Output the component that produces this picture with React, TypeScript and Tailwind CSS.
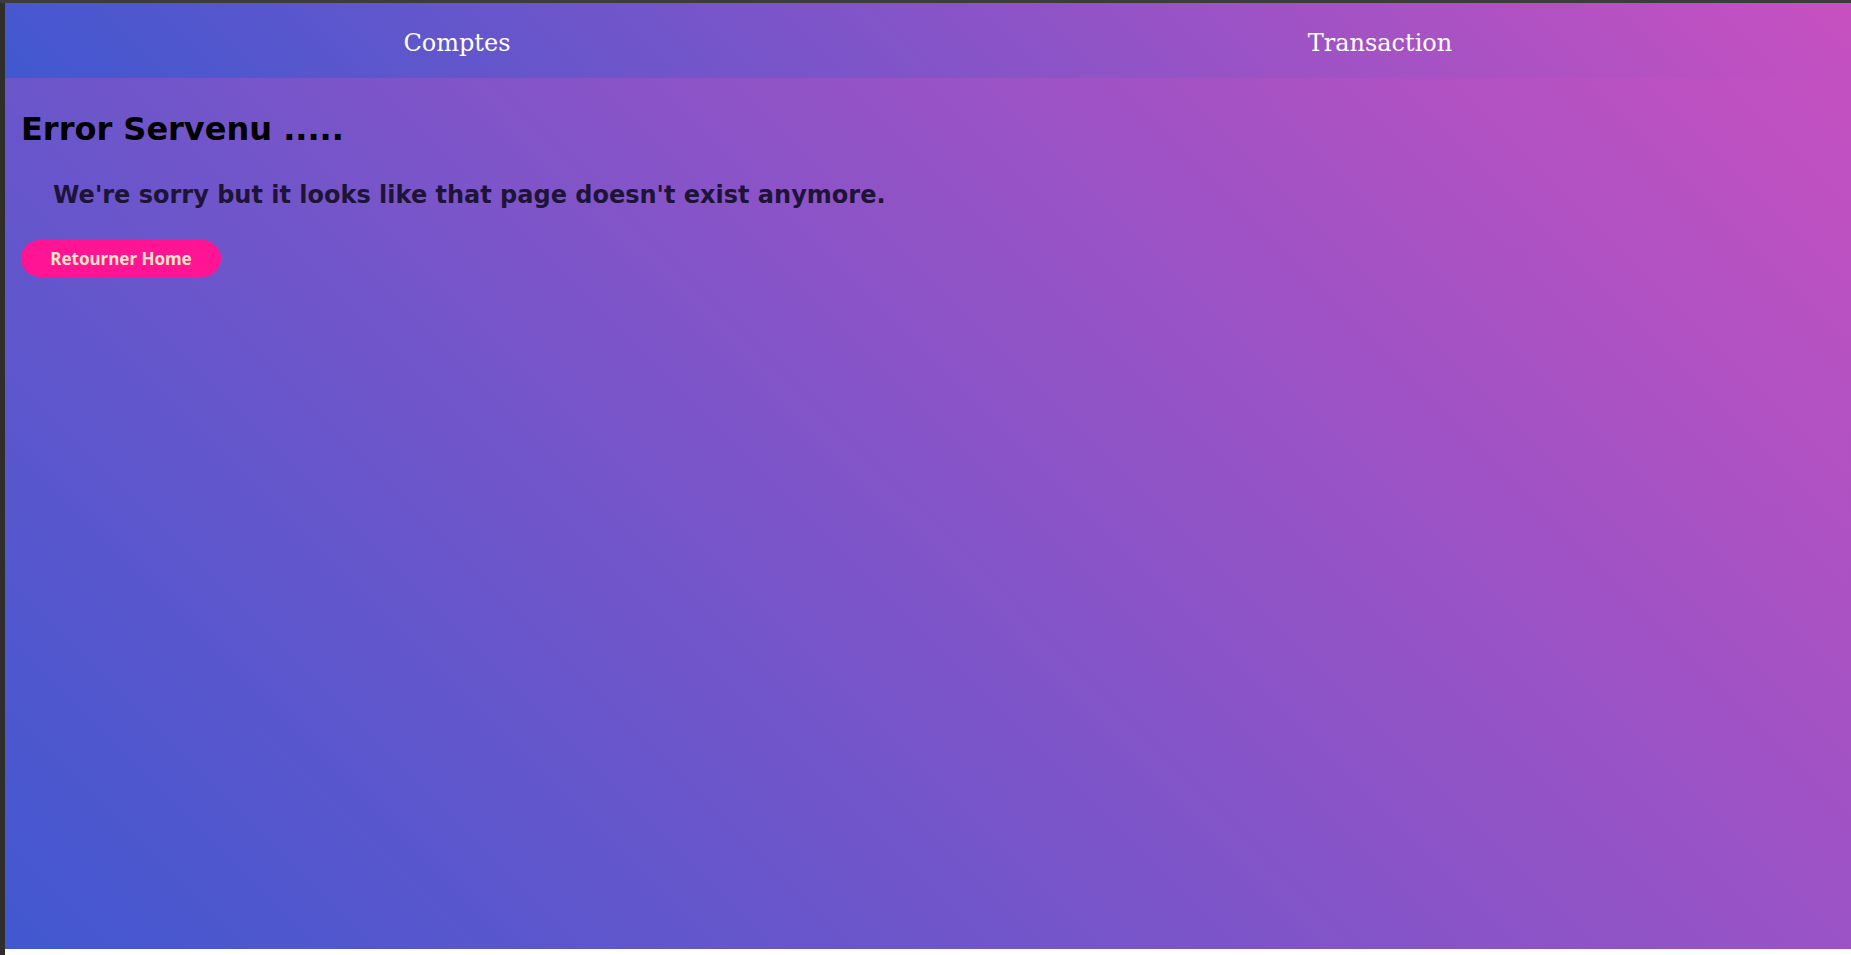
const gradient = "bg-[linear-gradient(45deg,#4158D0_0%,#C850C0_100%)]";

function NavBar() {
  return (
    <nav className={`flex h-[75px] w-full items-center pt-[5px] ${gradient}`}>
      <a className="flex flex-1 justify-center pr-[19px] font-['DejaVu_Serif',serif] text-[24px] leading-[28px] text-white">
        Comptes
      </a>
      <a className="flex flex-1 justify-center pr-[19px] font-['DejaVu_Serif',serif] text-[24px] leading-[28px] text-white">
        Transaction
      </a>
    </nav>
  );
}

function NotFound() {
  return (
    <div className="flex flex-col items-start pl-4">
      <h1 className="mt-[33px] font-['DejaVu_Sans',sans-serif] text-[32px] font-bold leading-[37px] text-black">
        Error Servenu .....
      </h1>
      <h2 className="ml-8 mt-[33px] font-['DejaVu_Sans',sans-serif] text-[24px] font-bold leading-[28px] text-[#1e1437]">
        We're sorry but it looks like that page doesn't exist anymore.
      </h2>
      <button className="mt-[31px] flex h-[37px] w-[200px] items-center justify-center rounded-full bg-[#ff1493] font-['Noto_Sans',sans-serif] text-[17px] font-bold text-[#ffe4c4]">
        Retourner Home
      </button>
    </div>
  );
}

export default function App() {
  return (
    <div className="flex h-[955px] w-full flex-col bg-white">
      <div className="h-[3px] w-full shrink-0 bg-[#3c3c3c]" />
      <div className="flex flex-1">
        <div className="w-[5px] shrink-0 bg-[#302e2a]" />
        <div className="flex flex-1 flex-col">
          <main className={`flex h-[946px] w-full flex-col ${gradient}`}>
            <NavBar />
            <NotFound />
          </main>
          <div className="flex-1 bg-white" />
        </div>
      </div>
    </div>
  );
}
